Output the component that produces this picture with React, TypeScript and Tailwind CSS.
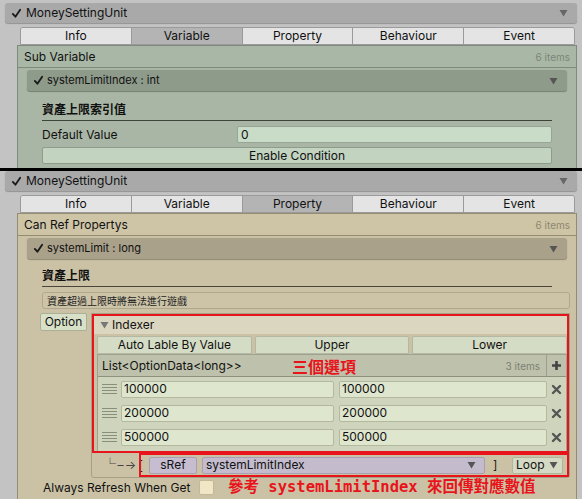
import React from 'react';

const font = "font-['Inter','Noto_Sans_CJK_TC',sans-serif]";

const Check = () => (
  <svg width="11" height="11" viewBox="0 0 12 12" className="shrink-0">
    <path d="M2 6.5 L4.8 9.5 L10 2" fill="none" stroke="#1a1a1a" strokeWidth="2" strokeLinecap="round" strokeLinejoin="round" />
  </svg>
);

const Tri = ({ color = '#4a4a4a' }: { color?: string }) => (
  <svg width="9" height="8" viewBox="0 0 9 8" className="shrink-0">
    <path d="M0.5 1 L8.5 1 L4.5 7.5 Z" fill={color} />
  </svg>
);

const Handle = () => (
  <div className="flex w-[15px] shrink-0 flex-col gap-[2px]">
    {[0, 1, 2, 3].map((i) => (
      <div key={i} className="h-px bg-[#8a8f7c]" />
    ))}
  </div>
);

const Cross = () => (
  <svg width="11" height="11" viewBox="0 0 11 11">
    <path d="M2 2 L9 9 M9 2 L2 9" stroke="#555" strokeWidth="2.4" strokeLinecap="round" />
  </svg>
);

const tabs = ['Info', 'Variable', 'Property', 'Behaviour', 'Event'];

const Header = () => (
  <div className="mx-[5px] flex h-[20px] items-center rounded-[3px] bg-[#a9a9a9] pl-[6px] pr-[9px] shadow-[0_1px_1px_rgba(0,0,0,0.25)]">
    <Check />
    <span className="ml-[4px] flex-1 text-[12px] text-[#111]">MoneySettingUnit</span>
    <Tri color="#666" />
  </div>
);

const Tabs = ({ active }: { active: number }) => (
  <div className="ml-[20px] mr-[7px] mt-[4px] flex h-[18px] overflow-hidden rounded-t-[3px] border border-[#9a9a9a]">
    {tabs.map((t, i) => (
      <div
        key={t}
        className={`flex flex-1 items-center justify-center text-[12px] text-[#111] ${i > 0 ? 'border-l border-[#9a9a9a]' : ''} ${i === active ? 'bg-[#b4b4b4]' : 'bg-[#e4e4e4]'}`}
      >
        {t}
      </div>
    ))}
  </div>
);

export default function App() {
  return (
    <div className={`${font} h-[499px] w-[582px] overflow-hidden bg-[#c3c3c3] leading-none`}>
      {/* top screenshot */}
      <div className="h-[168px] overflow-hidden pt-[3px]">
        <Header />
        <Tabs active={1} />
        <div className="ml-[17px] mr-[5px] h-[123px] border-x border-t border-[#7e8a7c] bg-[#a9b6a5]">
          <div className="flex h-[22px] items-center justify-between border-b border-[#7e8a7c] bg-[#a9b8a6] px-[6px]">
            <span className="text-[12px] text-[#111]">Sub Variable</span>
            <span className="text-[10px] text-[#7b8579]">6 items</span>
          </div>
          <div className="mx-[9px] mt-[2px] flex h-[21px] items-center rounded-[3px] bg-[#8e9a8a] pl-[6px] pr-[9px] shadow-[0_1px_1px_rgba(0,0,0,0.3)]">
            <Check />
            <span className="ml-[3px] flex-1 text-[11px] text-[#111]">systemLimitIndex : int</span>
            <Tri color="#555" />
          </div>
          <div className="mx-[24px] mt-[13px] border-b border-[#3d453b] pb-[4px] text-[12px] font-bold text-[#111]">資產上限索引值</div>
          <div className="mx-[24px] mt-[5px] flex h-[17px] items-center">
            <span className="w-[195px] text-[12px] text-[#111]">Default Value</span>
            <div className="flex h-[17px] flex-1 items-center rounded-[2px] border border-[#97a694] bg-[#c8dcc8] px-[3px] text-[12px] text-[#111]">0</div>
          </div>
          <div className="mx-[24px] mt-[4px] flex h-[17px] items-center justify-center rounded-[2px] border border-[#8e9c8b] bg-[#c2d3c0] text-[12px] text-[#111]">
            Enable Condition
          </div>
        </div>
      </div>
      <div className="h-[3px] bg-black" />
      {/* bottom screenshot */}
      <div className="h-[328px] overflow-hidden">
        <Header />
        <Tabs active={2} />
        <div className="ml-[17px] mr-[5px] h-[300px] border-x border-t border-[#958c72] bg-[#cbc2a5]">
          <div className="flex h-[22px] items-center justify-between border-b border-[#958c72] bg-[#cec4a6] px-[6px]">
            <span className="text-[12px] text-[#111]">Can Ref Propertys</span>
            <span className="text-[10px] text-[#8f876f]">6 items</span>
          </div>
          <div className="mx-[9px] mt-[2px] flex h-[21px] items-center rounded-[3px] bg-[#aaa18a] pl-[6px] pr-[9px] shadow-[0_1px_1px_rgba(0,0,0,0.3)]">
            <Check />
            <span className="ml-[3px] flex-1 text-[11px] text-[#111]">systemLimit : long</span>
            <Tri color="#555" />
          </div>
          <div className="mx-[24px] mt-[11px] border-b border-[#4a4538] pb-[4px] text-[12px] font-bold text-[#111]">資產上限</div>
          <div className="ml-[24px] mr-[6px] mt-[5px] flex h-[17px] items-center rounded-[3px] border border-[#b0a88e] bg-[#cdc4a8] px-[4px] text-[10px] text-[#222]">
            資產超過上限時將無法進行遊戲
          </div>
          <div className="ml-[22px] mr-[6px] mt-[4px] flex items-start gap-[4px]">
            <div className="flex h-[18px] w-[47px] shrink-0 items-center justify-center rounded-[2px] border border-[#a9b098] bg-[#d8e1c8] text-[12px] text-[#111]">
              Option
            </div>
            <div className="flex-1 rounded-b-[3px] border border-[#a79f85]">
              <div className="border-2 border-[#e8141c] bg-[#cbc2a5]">
                <div className="flex h-[18px] items-center gap-[3px] bg-[#dbd6c0] px-[6px] text-[12px] text-[#111]">
                  <Tri color="#777" />
                  Indexer
                </div>
                <div className="ml-[3px] mt-[2px] flex h-[18px] gap-[3px]">
                  {['Auto Lable By Value', 'Upper', 'Lower'].map((b) => (
                    <div key={b} className="flex flex-1 items-center justify-center rounded-t-[2px] border border-[#b5b9a3] bg-[#d5dcc5] text-[12px] text-[#111]">
                      {b}
                    </div>
                  ))}
                </div>
                <div className="ml-[3px] border-x border-t border-[#9ea28e] bg-[#cfd5bc]">
                  <div className="flex h-[22px] items-center border-b border-[#8d917e] bg-[#bec2ac] pl-[4px] text-[12px] text-[#111]">
                    <span className="w-[190px]">List&lt;OptionData&lt;long&gt;&gt;</span>
                    <span className="flex-1 text-[16px] font-bold text-[#e8141c] font-['Noto_Sans_CJK_TC',serif]">三個選項</span>
                    <span className="mr-[6px] text-[10px] text-[#7c8070]">3 items</span>
                    <div className="flex h-full w-[20px] items-center justify-center border-l border-[#9a9e8a]">
                      <svg width="11" height="11" viewBox="0 0 11 11">
                        <path d="M5.5 1 V10 M1 5.5 H10" stroke="#444" strokeWidth="2.6" />
                      </svg>
                    </div>
                  </div>
                  {['100000', '200000', '500000'].map((v) => (
                    <div key={v} className="flex h-[24px] items-center pl-[4px] pr-[1px]">
                      <Handle />
                      <div className="ml-[4px] flex h-[17px] w-[213px] items-center rounded-[2px] border border-[#b3b89f] bg-[#dfe6ce] px-[2px] text-[12px] text-[#111]">{v}</div>
                      <div className="ml-[5px] flex h-[17px] flex-1 items-center rounded-[2px] border border-[#b3b89f] bg-[#dfe6ce] px-[2px] text-[12px] text-[#111]">{v}</div>
                      <div className="flex w-[18px] justify-center">
                        <Cross />
                      </div>
                    </div>
                  ))}
                  <div className="h-[2px]" />
                </div>
              </div>
              <div className="flex h-[24px] items-center pl-[12px]">
                <span className="text-[12px] text-[#444] tracking-[-1px]">└ – →</span>
                <span className="ml-[3px] text-[13px] text-[#222]">[</span>
                <div className="-ml-[4px] flex h-[24px] flex-1 items-center border-2 border-[#e8141c] pl-[8px] pr-[4px]">
                  <div className="flex h-[17px] w-[48px] items-center justify-center rounded-[2px] border border-[#a89fb2] bg-[#c7bdd1] text-[12px] text-[#111]">sRef</div>
                  <div className="ml-[5px] flex h-[17px] w-[283px] items-center justify-between rounded-[2px] border border-[#a89fb2] bg-[#c4bccd] pl-[3px] pr-[8px] text-[12px] text-[#111]">
                    systemLimitIndex
                    <Tri color="#555" />
                  </div>
                  <span className="ml-[8px] w-[19px] text-[12px] text-[#222]">]</span>
                  <div className="flex h-[17px] flex-1 items-center justify-between rounded-[2px] border border-[#b0b59c] bg-[#d5dac4] pl-[3px] pr-[4px] text-[12px] text-[#111]">
                    Loop
                    <Tri color="#555" />
                  </div>
                </div>
              </div>
            </div>
          </div>
          <div className="ml-[25px] mt-[2px] flex items-center">
            <span className="w-[156px] text-[12px] text-[#111]">Always Refresh When Get</span>
            <div className="h-[15px] w-[15px] rounded-[2px] border border-[#c3b996] bg-[#f1e6c6]" />
            <span className="ml-[14px] text-[15.5px] font-bold text-[#e8141c] font-['DejaVu_Sans_Mono','Noto_Sans_CJK_TC',monospace]">參考 systemLimitIndex 來回傳對應數值</span>
          </div>
        </div>
      </div>
    </div>
  );
}
